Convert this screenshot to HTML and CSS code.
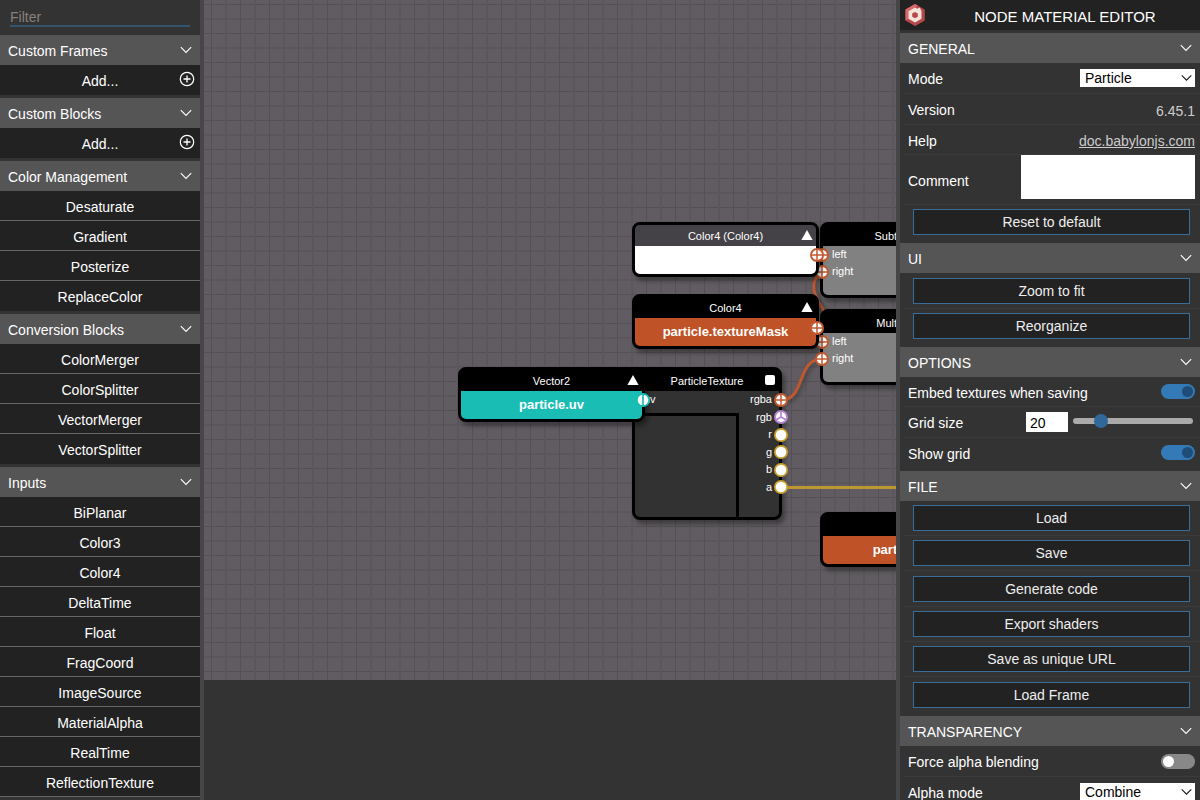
FILE: index.html
```html
<!DOCTYPE html>
<html lang="en">
<head>
<meta charset="utf-8">
<title>Node Material Editor</title>
<link rel="stylesheet" href="styles.css">
</head>
<body>
<svg class="defs" aria-hidden="true">
  <symbol id="chevron" viewBox="0 0 12 8"><path d="M0.8 1.2 6 6.4 11.2 1.2" fill="none" stroke="currentColor" stroke-width="1.1"/></symbol>
  <symbol id="plus" viewBox="0 0 16 16"><circle cx="8" cy="8" r="6.7" fill="none" stroke="currentColor" stroke-width="1.2"/><path d="M8 4.5v7M4.5 8h7" stroke="currentColor" stroke-width="1.3"/></symbol>
  <symbol id="triangle" viewBox="0 0 12 12"><path d="M6 1 11.6 11H.4z" fill="#fff"/></symbol>
  <symbol id="square" viewBox="0 0 12 12"><rect x="1" y="1" width="10" height="10" rx="2" fill="#fff"/></symbol>
  <symbol id="port-color4" viewBox="0 0 14 14"><circle cx="7" cy="7" r="7" fill="#c25a30"/><circle cx="7" cy="7" r="5.1" fill="#fff"/><path d="M7 1v12M1 7h12" stroke="#c25a30" stroke-width="1.5"/></symbol>
  <symbol id="port-color3" viewBox="0 0 14 14"><circle cx="7" cy="7" r="7" fill="#b483cf"/><circle cx="7" cy="7" r="5.1" fill="#fff"/><path d="M7 7V1M7 7l5.2 3M7 7l-5.2 3" stroke="#b483cf" stroke-width="1.7"/></symbol>
  <symbol id="port-float" viewBox="0 0 14 14"><circle cx="7" cy="7" r="7" fill="#c9a02c"/><circle cx="7" cy="7" r="5.3" fill="#fff"/></symbol>
  <symbol id="port-vector2" viewBox="0 0 14 14"><circle cx="7" cy="7" r="7" fill="#19bdb4"/><circle cx="7" cy="7" r="5.3" fill="#fff"/><path d="M7 1v12" stroke="#19bdb4" stroke-width="1.7"/></symbol>
</svg>

<div class="editor">
  <nav class="palette" aria-label="Blocks">
    <div class="filter"><input class="filter-input" type="text" placeholder="Filter" aria-label="Filter"></div>
    <section class="group">
      <button class="group-header">Custom Frames<svg class="chevron"><use href="#chevron"/></svg></button>
      <button class="block">Add...<svg class="plus"><use href="#plus"/></svg></button>
    </section>
    <section class="group">
      <button class="group-header">Custom Blocks<svg class="chevron"><use href="#chevron"/></svg></button>
      <button class="block">Add...<svg class="plus"><use href="#plus"/></svg></button>
    </section>
    <section class="group">
      <button class="group-header">Color Management<svg class="chevron"><use href="#chevron"/></svg></button>
      <button class="block">Desaturate</button>
      <button class="block">Gradient</button>
      <button class="block">Posterize</button>
      <button class="block">ReplaceColor</button>
    </section>
    <section class="group">
      <button class="group-header">Conversion Blocks<svg class="chevron"><use href="#chevron"/></svg></button>
      <button class="block">ColorMerger</button>
      <button class="block">ColorSplitter</button>
      <button class="block">VectorMerger</button>
      <button class="block">VectorSplitter</button>
    </section>
    <section class="group group-open">
      <button class="group-header">Inputs<svg class="chevron"><use href="#chevron"/></svg></button>
      <button class="block">BiPlanar</button>
      <button class="block">Color3</button>
      <button class="block">Color4</button>
      <button class="block">DeltaTime</button>
      <button class="block">Float</button>
      <button class="block">FragCoord</button>
      <button class="block">ImageSource</button>
      <button class="block">MaterialAlpha</button>
      <button class="block">RealTime</button>
      <button class="block">ReflectionTexture</button>
    </section>
  </nav>

  <div class="splitter"></div>

  <main class="graph">
    <div class="canvas">
      <svg class="wires" aria-hidden="true">
        <path class="wire-color4" d="M618 272C604 282 609 295 622 314"/>
        <path class="wire-color4" d="M577 400C602 400 592 359 618 359"/>
        <path class="wire-float" d="M577 487.500H720"/>
      </svg>

      <article class="node node-math" style="left:616px;top:222px">
        <h2 class="node-title">Subtract</h2>
        <div class="node-body"><div class="in-label">left</div><div class="in-label">right</div></div>
      </article>
      <article class="node node-math" style="left:616px;top:309px">
        <h2 class="node-title">Multiply</h2>
        <div class="node-body"><div class="in-label">left</div><div class="in-label">right</div></div>
      </article>
      <svg class="port" style="left:611px;top:248px"><use href="#port-color4"/></svg>
      <svg class="port" style="left:611px;top:265px"><use href="#port-color4"/></svg>
      <svg class="port" style="left:611px;top:335px"><use href="#port-color4"/></svg>
      <svg class="port" style="left:611px;top:352px"><use href="#port-color4"/></svg>

      <article class="node node-texture" style="left:428px;top:367px">
        <h2 class="node-title">ParticleTexture<svg class="node-icon"><use href="#square"/></svg></h2>
        <div class="node-body">
          <div class="texture-in"><div class="in-label">uv</div><div class="preview"></div></div>
          <div class="texture-out"><div>rgba</div><div>rgb</div><div>r</div><div>g</div><div>b</div><div>a</div></div>
        </div>
      </article>
      <svg class="port" style="left:570px;top:393px"><use href="#port-color4"/></svg>
      <svg class="port" style="left:570px;top:410px"><use href="#port-color3"/></svg>
      <svg class="port" style="left:570px;top:428px"><use href="#port-float"/></svg>
      <svg class="port" style="left:570px;top:445px"><use href="#port-float"/></svg>
      <svg class="port" style="left:570px;top:463px"><use href="#port-float"/></svg>
      <svg class="port" style="left:570px;top:480px"><use href="#port-float"/></svg>

      <article class="node node-input node-constant" style="left:428px;top:222px">
        <h2 class="node-title">Color4 (Color4)<svg class="node-icon"><use href="#triangle"/></svg></h2>
        <div class="node-value"></div>
      </article>
      <svg class="port" style="left:606px;top:248px"><use href="#port-color4"/></svg>
      <article class="node node-input" style="left:428px;top:294px">
        <h2 class="node-title">Color4<svg class="node-icon"><use href="#triangle"/></svg></h2>
        <div class="node-value">particle.textureMask</div>
      </article>
      <svg class="port" style="left:606px;top:321px"><use href="#port-color4"/></svg>
      <article class="node node-input node-vector" style="left:254px;top:367px">
        <h2 class="node-title">Vector2<svg class="node-icon"><use href="#triangle"/></svg></h2>
        <div class="node-value">particle.uv</div>
      </article>
      <svg class="port" style="left:432px;top:393px"><use href="#port-vector2"/></svg>
      <article class="node node-input" style="left:616px;top:512px">
        <h2 class="node-title"></h2>
        <div class="node-value">particle.color</div>
      </article>
    </div>
  </main>

  <div class="splitter"></div>

  <aside class="inspector" aria-label="Properties">
    <header class="brand">
      <svg class="logo" viewBox="0 0 20 22" aria-hidden="true">
        <path d="M10 0 19.500 5.500v11L10 22 .5 16.500v-11z" fill="#bb464b"/>
        <path d="M10 0 .5 5.500v11l3-1.800V7.300L13 1.700z" fill="#d9696c"/>
        <path d="M19.500 5.500v11L10 22v-3.600l6.500-3.700V7.300z" fill="#b5484c"/>
        <path d="m10 3.600 2.200 1.200L14.800 3.400l1.700 3.800v7.500L10 18.400l-6.500-3.700V7.200z" fill="#f3e4da"/>
        <path d="m10 8 2.800 1.500v3.200L10 14.300l-2.800-1.600V9.500z" fill="#bb464b"/>
      </svg>
      <h1 class="brand-title">NODE MATERIAL EDITOR</h1>
    </header>

    <section class="group">
      <button class="group-header">GENERAL<svg class="chevron"><use href="#chevron"/></svg></button>
      <div class="rows">
        <div class="row"><label for="mode">Mode</label><span class="select"><select id="mode"><option>Particle</option></select><svg class="select-arrow"><use href="#chevron"/></svg></span></div>
        <div class="row"><span>Version</span><span class="value">6.45.1</span></div>
        <div class="row row-short"><span>Help</span><a class="value" href="#help">doc.babylonjs.com</a></div>
        <div class="row row-comment"><label for="comment">Comment</label><textarea id="comment"></textarea></div>
        <div class="row row-button"><button class="action">Reset to default</button></div>
      </div>
    </section>

    <section class="group">
      <button class="group-header">UI<svg class="chevron"><use href="#chevron"/></svg></button>
      <div class="rows rows-inset">
        <div class="row row-button"><button class="action">Zoom to fit</button></div>
        <div class="row row-button"><button class="action">Reorganize</button></div>
      </div>
    </section>

    <section class="group">
      <button class="group-header">OPTIONS<svg class="chevron"><use href="#chevron"/></svg></button>
      <div class="rows">
        <div class="row row-short"><label for="embed">Embed textures when saving</label><input class="toggle" id="embed" type="checkbox" checked></div>
        <div class="row"><label for="grid">Grid size</label><span class="slider-field"><input class="number" id="grid" type="text" value="20"><input class="slider" type="range" min="0" max="100" value="20" aria-label="Grid size"></span></div>
        <div class="row row-short"><label for="show">Show grid</label><input class="toggle" id="show" type="checkbox" checked></div>
      </div>
    </section>

    <section class="group">
      <button class="group-header">FILE<svg class="chevron"><use href="#chevron"/></svg></button>
      <div class="rows">
        <div class="row row-button"><button class="action">Load</button></div>
        <div class="row row-button"><button class="action">Save</button></div>
        <div class="row row-button"><button class="action">Generate code</button></div>
        <div class="row row-button"><button class="action">Export shaders</button></div>
        <div class="row row-button"><button class="action">Save as unique URL</button></div>
        <div class="row row-button"><button class="action">Load Frame</button></div>
      </div>
    </section>

    <section class="group">
      <button class="group-header">TRANSPARENCY<svg class="chevron"><use href="#chevron"/></svg></button>
      <div class="rows">
        <div class="row"><label for="force">Force alpha blending</label><input class="toggle" id="force" type="checkbox"></div>
        <div class="row"><label for="alpha">Alpha mode</label><span class="select"><select id="alpha"><option>Combine</option></select><svg class="select-arrow"><use href="#chevron"/></svg></span></div>
      </div>
    </section>
  </aside>
</div>
</body>
</html>
```
FILE: styles.css
```css
* { box-sizing: border-box; }

body {
  margin: 0;
  background: #333;
  color: #fff;
  font-family: "Liberation Sans", Arial, sans-serif;
  font-size: 14px;
}

button, input, select, textarea { font: inherit; color: inherit; }

.defs { position: absolute; width: 0; height: 0; }

.editor {
  display: grid;
  grid-template-columns: 200px 4px minmax(0, 1fr) 4px 300px;
  height: 100vh;
  overflow: hidden;
}

.palette, .inspector { overflow: hidden; background: #333; }
.splitter { background: #464547; }

/* Collapsible groups */
.group { margin-bottom: 3px; }

.group-header {
  display: flex;
  align-items: center;
  justify-content: space-between;
  width: 100%;
  height: 30px;
  padding: 2px 8px 0;
  border: 0;
  background: #555;
  text-align: left;
}

.chevron { width: 12px; height: 8px; margin-bottom: 2px; }

/* Block palette */
.filter { height: 35px; padding: 8px 10px 0; }

.filter-input {
  display: block;
  width: 100%;
  height: 19px;
  padding: 0;
  border: 0;
  border-bottom: 2px solid #34536c;
  background: none;
  outline: 0;
}
.filter-input::placeholder { color: #88807b; opacity: 1; }

.block {
  display: block;
  position: relative;
  width: 100%;
  height: 30px;
  padding: 2px 0 0;
  border: 0;
  border-bottom: 1px solid #666;
  background: #222;
  text-align: center;
}
.block:last-child { border-bottom-color: #222; }
.group-open .block { border-bottom-color: #666; }

.plus { position: absolute; top: 6px; right: 5px; width: 16px; height: 16px; }

/* Graph */
.canvas {
  position: relative;
  height: 85%;
  overflow: hidden;
  background-color: #605c61;
  background-image:
    linear-gradient(90deg, transparent 7px, #545055 7px, #545055 8px, transparent 8px, transparent 21px, #5a565b 21px, #5a565b 23px, transparent 23px),
    linear-gradient(transparent 4px, #545055 4px, #545055 5px, transparent 5px, transparent 18px, #5a565b 18px, #5a565b 20px, transparent 20px);
  background-size: 29px 29px;
}

.wires { position: absolute; inset: 0; width: 100%; height: 100%; }
.wires path { fill: none; stroke-width: 3; filter: drop-shadow(2px 2px 2px rgb(0 0 0 / 30%)); }
.wires .wire-color4 { stroke: #bd5830; }
.wires .wire-float { stroke: #bd9830; filter: none; }

.node {
  position: absolute;
  display: flex;
  flex-direction: column;
  border: 3px solid #000;
  border-radius: 8px;
  background: #000;
  box-shadow: 3px 4px 4px rgb(0 0 0 / 35%);
  font-size: 11px;
}

.node-title {
  position: relative;
  margin: 0;
  height: 21px;
  padding-top: 1px;
  font-size: 11px;
  font-weight: 400;
  line-height: 20px;
  text-align: center;
}

.node-icon { position: absolute; top: 4px; right: 3px; width: 12px; height: 12px; }

.node-math { width: 150px; height: 76px; }
.node-math .node-body { flex: 1; background: #818181; border-radius: 0 0 5px 5px; }
.in-label { height: 17px; padding-left: 9px; line-height: 16px; }

.node-texture { width: 150px; height: 153px; }
.node-texture .node-body { display: flex; flex: 1; background: #323232; border-radius: 0 0 5px 5px; }
.texture-in { display: flex; flex-direction: column; width: 104px; }
.preview { flex: 1; margin-top: 5px; border: 3px solid #000; border-width: 3px 3px 0 0; }
.texture-out {
  display: flex;
  flex: 1;
  flex-direction: column;
  justify-content: space-between;
  height: 104px;
  padding-right: 7px;
  line-height: 16px;
  text-align: right;
}

.node-input { width: 187px; height: 55px; }
.node-value {
  flex: 1;
  background: #bf5226;
  border-radius: 0 0 5px 5px;
  font-size: 13px;
  font-weight: 700;
  line-height: 28px;
  text-align: center;
}
.node-constant, .node-constant .node-title { background: #444247; }
.node-constant .node-title { border-radius: 5px 5px 0 0; }
.node-constant .node-value { background: #fff; }
.node-vector .node-value { background: #19bdb4; }

.port { position: absolute; width: 14px; height: 14px; }

/* Property panel */
.brand {
  display: flex;
  align-items: center;
  height: 30px;
  margin-bottom: 3px;
  padding-left: 5px;
  background: #222;
}
.logo { width: 20px; height: 22px; }
.brand-title {
  flex: 1;
  margin: 2px 0 0 5px;
  font-size: 15px;
  font-weight: 400;
  text-align: center;
}

.row {
  display: flex;
  align-items: center;
  justify-content: space-between;
  height: 31px;
  margin-left: 4px;
  padding: 0 5px 0 4px;
  border-bottom: 1px solid #3b3b3b;
}
.row label, .row > span:first-child { padding-top: 2px; }
.row:last-child { border-bottom-color: transparent; }
.rows-inset { padding-top: 1px; }
.row-short { height: 30px; }
.value { padding-top: 3px; color: #ccc; }

.row-comment { height: 50px; }
.row textarea {
  align-self: flex-start;
  width: 174px;
  height: 44px;
  border: 0;
  background: #fff;
  color: #000;
  resize: none;
}

.row-button { height: 35px; padding: 0 10px 0 9px; }
.row-button:nth-child(3n) { height: 36px; }
.action {
  width: 100%;
  height: 26px;
  padding: 0;
  border: 1px solid #3a6c98;
  background: #222;
  color: #eee;
}

.select { display: flex; position: relative; }
.row .select { padding: 0; }
.select select {
  appearance: none;
  width: 115px;
  height: 18px;
  padding: 0 5px;
  border: 0;
  border-radius: 0;
  background: #fff;
  color: #000;
}
.select-arrow { position: absolute; top: 5px; right: 3px; width: 11px; height: 8px; color: #111; pointer-events: none; }

.toggle {
  appearance: none;
  display: flex;
  align-items: center;
  width: 34px;
  height: 15px;
  margin: 0;
  padding: 0 2px;
  border-radius: 8px;
  background: #888;
}
.toggle::before { content: ""; width: 11px; height: 11px; border-radius: 50%; background: #fff; }
.toggle:checked { justify-content: flex-end; background: #337ab7; }
.toggle:checked::before { background: #1f4d7a; }

.slider-field { display: flex; align-items: center; gap: 5px; }
.number { width: 42px; height: 20px; padding: 2px 4px 0; border: 0; background: #fff; color: #000; }
.slider {
  appearance: none;
  width: 120px;
  height: 6px;
  margin: 0 2px 3px 0;
  border-radius: 3px;
  background: #aaa;
}
.slider::-webkit-slider-thumb { appearance: none; width: 14px; height: 14px; border-radius: 50%; background: #306899; }
```
